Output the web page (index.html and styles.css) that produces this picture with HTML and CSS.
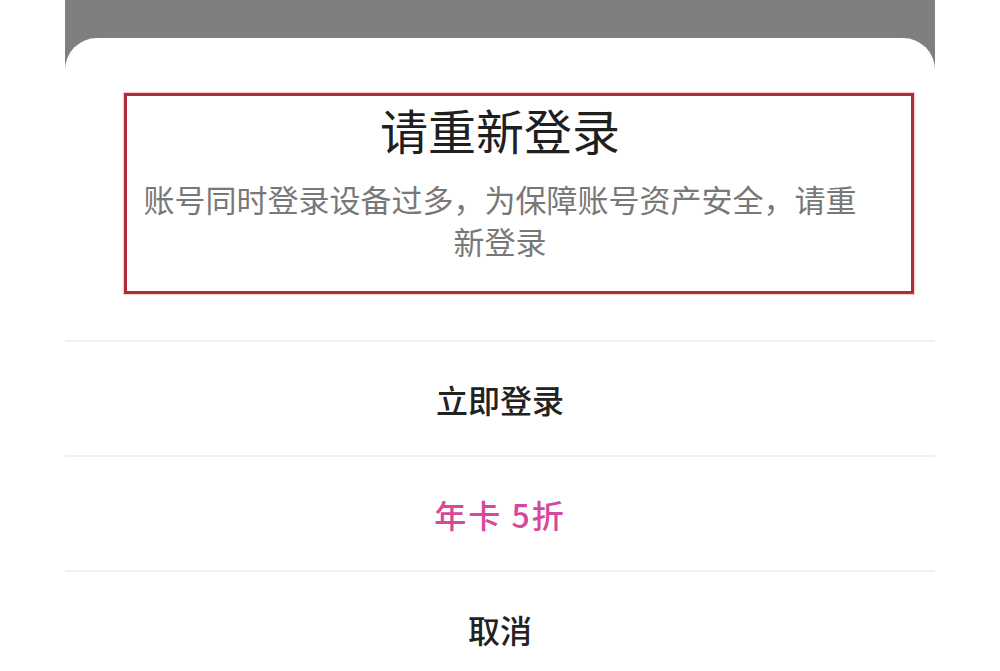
FILE: index.html
```html
<!DOCTYPE html>
<html lang="zh-CN">
<head>
  <meta charset="UTF-8">
  <meta name="viewport" content="width=device-width, initial-scale=1.0">
  <title>请重新登录</title>
  <link rel="stylesheet" href="styles.css">
</head>
<body>
  <div class="screen">
    <div class="sheet">
      <!-- Message header, with the red review box drawn over it -->
      <div class="sheet-header">
        <div class="mark-box"></div>
        <h2 class="sheet-title">请重新登录</h2>
        <p class="sheet-message">账号同时登录设备过多，为保障账号资产安全，请重新登录</p>
      </div>

      <!-- Actions -->
      <button type="button" class="sheet-action">立即登录</button>
      <button type="button" class="sheet-action promo">年卡 5折</button>
      <button type="button" class="sheet-action">取消</button>
    </div>
  </div>
</body>
</html>
```

FILE: styles.css
```css
    html, body {
      margin: 0;
      padding: 0;
      background: #fff;
      overflow: hidden;
    }
    body {
      font-family: "Noto Sans CJK SC", "Noto Sans", sans-serif;
    }
    .screen {
      width: 870px;
      margin: 0 auto;
      min-height: 671px;
      background: #7f7f7f;
      padding-top: 38px;
      box-sizing: border-box;
    }
    .sheet {
      background: #fff;
      border-radius: 32px 32px 0 0;
      min-height: 633px;
      display: flex;
      flex-direction: column;
    }
    .sheet-header {
      position: relative;
      padding: 61px 20px 78px;
      text-align: center;
    }
    .mark-box {
      position: absolute;
      left: 59px;
      top: 55px;
      width: 784px;
      height: 195px;
      border: 3px solid #ad2c36;
      box-shadow: 0 0 1px 1px rgba(230, 120, 130, 0.35);
    }
    .sheet-title {
      margin: 0 0 19px;
      font-size: 48px;
      line-height: 60px;
      font-weight: 400;
      color: #1f1f1f;
    }
    .sheet-message {
      width: 730px;
      margin: 0 auto;
      font-size: 31px;
      line-height: 42px;
      color: #787878;
    }
    .sheet-action {
      display: block;
      width: 100%;
      height: 115px;
      padding: 0;
      border: none;
      border-top: 2px solid #efefef;
      background: #fff;
      font-family: inherit;
      font-size: 32px;
      font-weight: 500;
      color: #222;
      cursor: pointer;
    }
    .sheet-action.promo {
      color: #d6489a;
      letter-spacing: 2px;
    }
```
